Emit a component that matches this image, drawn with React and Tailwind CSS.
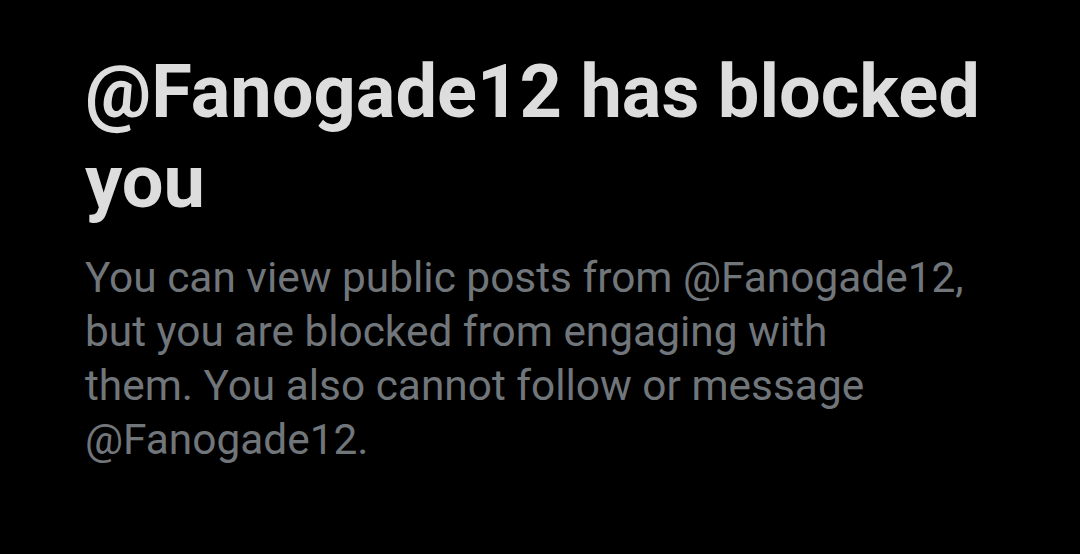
export default function App() {
  return (
    <div className="w-[1080px] h-[554px] bg-black overflow-hidden pl-[85px] pt-[47px]" style={{ fontFamily: 'Roboto, "Liberation Sans", sans-serif' }}>
      <h1 className="text-[74px] leading-[90px] font-bold text-[#dddddd] whitespace-nowrap">
        @Fanogade12 has blocked<br />you
      </h1>
      <p className="mt-[24px] text-[42.4px] leading-[54px] text-[#71767b] whitespace-nowrap">
        You can view public posts from @Fanogade12,<br />
        but you are blocked from engaging with<br />
        them. You also cannot follow or message<br />
        @Fanogade12.
      </p>
    </div>
  );
}
